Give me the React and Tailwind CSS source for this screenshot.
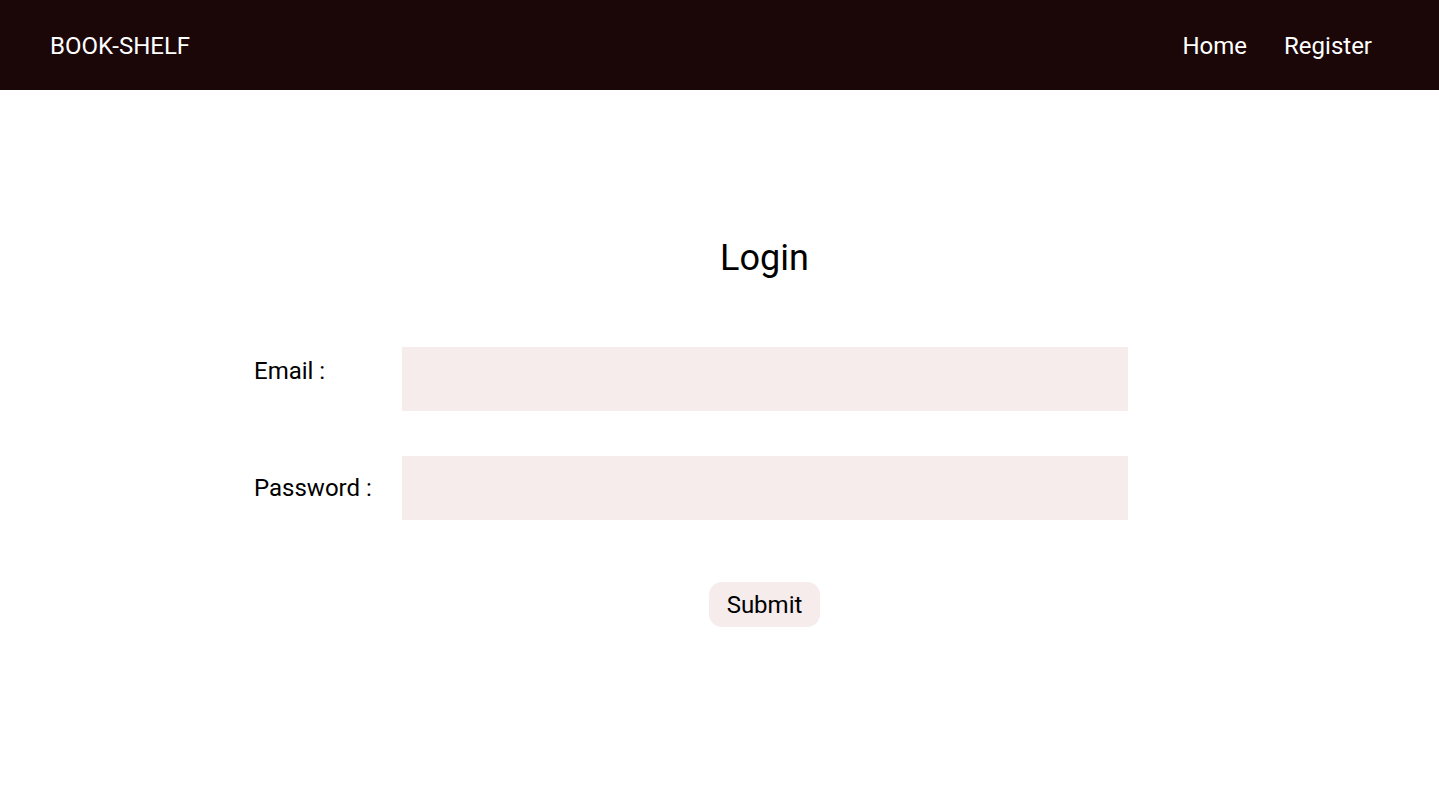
import React from 'react';

export default function App() {
  return (
    <div className="min-h-screen bg-white font-['Roboto',sans-serif] text-black">
      {/* Navbar */}
      <nav className="h-[90px] bg-[#1c0708] flex items-center justify-between pt-[2px] pl-[50px] pr-[67px]">
        <span className="text-[24px] text-white">BOOK-SHELF</span>
        <div className="flex items-center gap-[37px] text-[24px] text-white">
          <a href="#">Home</a>
          <a href="#">Register</a>
        </div>
      </nav>

      {/* Login form */}
      <div className="ml-[254px] w-[1021px] pt-[146px]">
        <h1 className="text-center text-[36px] leading-[44px]">Login</h1>
        <form className="mt-[67px] w-[874px]" onSubmit={(e) => e.preventDefault()}>
          <div className="flex items-start">
            <label className="w-[148px] pt-[9px] text-[24px] leading-[30px]">Email :</label>
            <input type="email" className="h-[64px] w-[726px] bg-[#f5eceb] outline-none px-3 text-[20px]" />
          </div>
          <div className="flex items-center mt-[45px]">
            <label className="w-[148px] text-[24px] leading-[30px]">Password :</label>
            <input type="password" className="h-[64px] w-[726px] bg-[#f5eceb] outline-none px-3 text-[20px]" />
          </div>
        </form>
        <div className="flex justify-center mt-[62px]">
          <button className="h-[45px] px-[17.5px] rounded-[13px] bg-[#f5eceb] text-[24px]">Submit</button>
        </div>
      </div>
    </div>
  );
}
